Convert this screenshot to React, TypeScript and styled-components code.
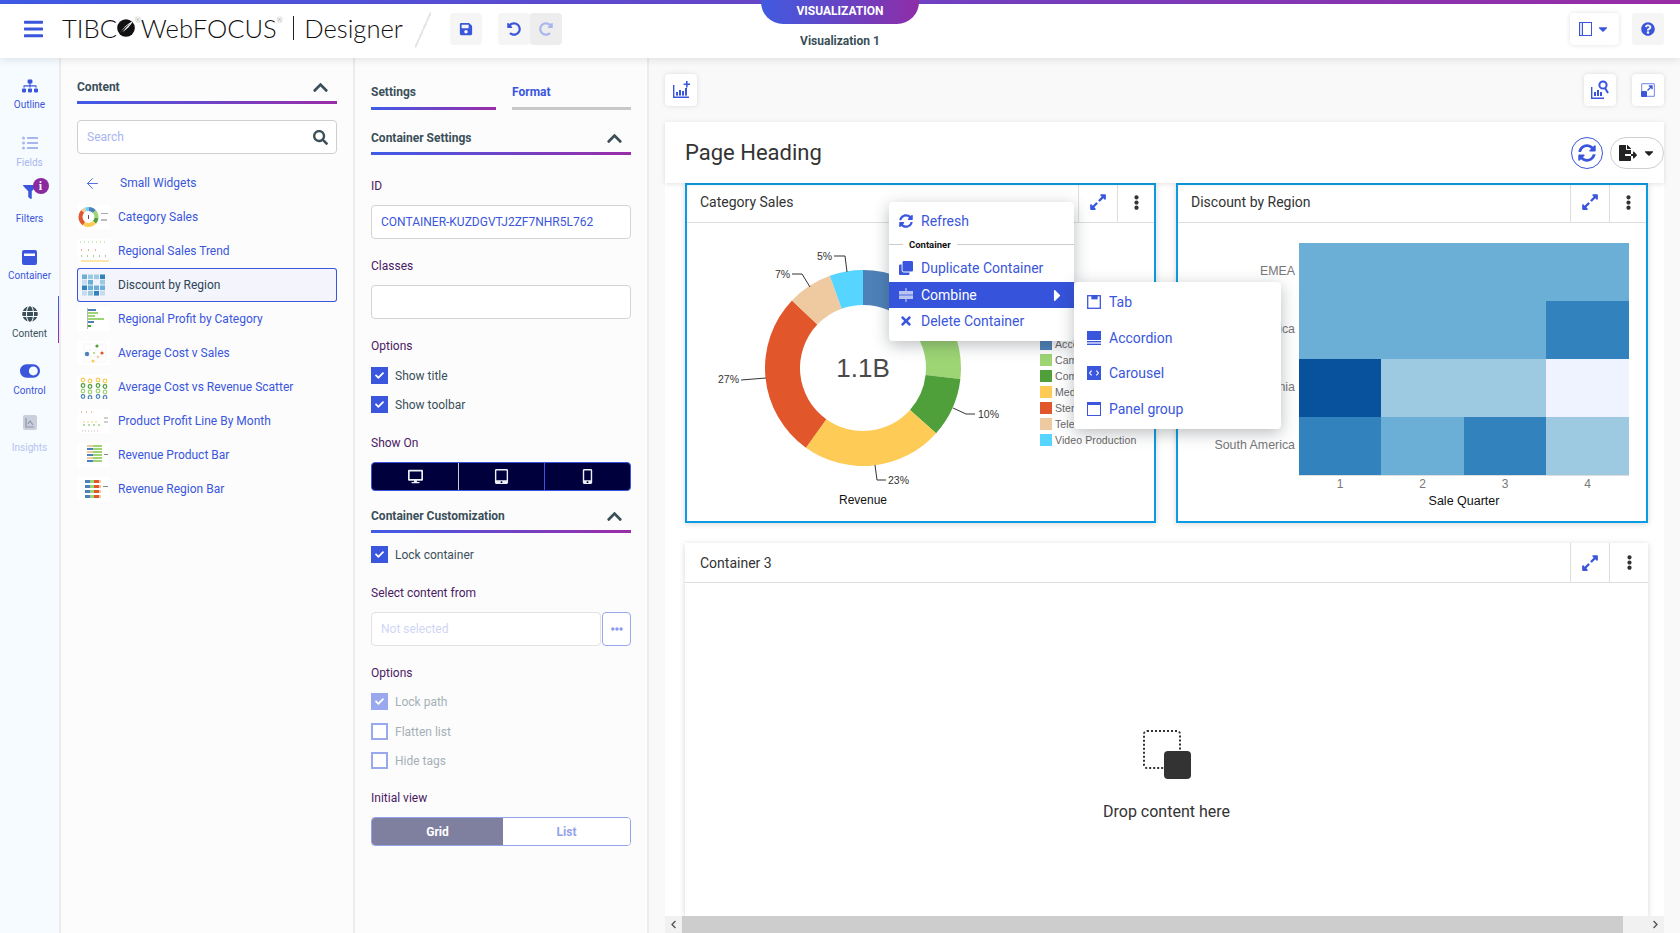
import React from "react";
import styled, { createGlobalStyle } from "styled-components";
import {
  FaBars,
  FaSave,
  FaUndoAlt,
  FaRedoAlt,
  FaSitemap,
  FaListUl,
  FaFilter,
  FaGlobe,
  FaToggleOn,
  FaSearch,
  FaDesktop,
  FaTabletAlt,
  FaMobileAlt,
  FaExpandAlt,
  FaEllipsisV,
  FaEllipsisH,
  FaSyncAlt,
  FaClone,
  FaTimes,
  FaCaretRight,
  FaCaretDown,
  FaQuestionCircle,
  FaFileExport,
  FaChevronUp,
  FaChevronLeft,
  FaChevronRight,
  FaCheck,
} from "react-icons/fa";
import { ArrowLeft } from "lucide-react";

const BLUE = "#3a56dc";
const INK = "#3a4f58";
const PURPLE = "#4a1a62";
const GRADIENT = "linear-gradient(90deg, #3f5be8 0%, #9b2da8 100%)";

const GlobalStyle = createGlobalStyle`
  * { box-sizing: border-box; }
  html, body { margin: 0; padding: 0; background: #fff; }
  body { font-family: Roboto, "Liberation Sans", sans-serif; overflow: hidden; }
`;

const Page = styled.div`
  width: 1680px;
  height: 933px;
  display: flex;
  flex-direction: column;
  overflow: hidden;
  position: relative;
`;

const TopLine = styled.div`
  height: 4px;
  flex: none;
  background: ${GRADIENT};
`;

const Header = styled.header`
  height: 54px;
  flex: none;
  display: flex;
  align-items: flex-start;
  background: #fff;
  box-shadow: 0 2px 8px rgba(0, 0, 0, 0.1);
  position: relative;
  z-index: 5;
  padding: 9px 16px 0 24px;
`;

const Burger = styled.div`
  width: 19px;
  height: 32px;
  display: flex;
  align-items: center;
  color: ${BLUE};
  font-size: 20px;
  margin-right: 19px;
  svg { width: 19px; height: 22px; }
`;

const Logo = styled.div`
  width: 342px;
  height: 30px;
  flex: none;
  display: flex;
  align-items: center;
  font-family: Lato, Roboto, sans-serif;
  font-size: 25.6px;
  font-weight: 300;
  color: #111;
  white-space: nowrap;
  svg { flex: none; }
  sup { font-size: 7px; align-self: flex-start; margin-top: 3px; color: #666; }
`;

const LogoDivider = styled.span`
  width: 1.5px;
  height: 24px;
  flex: none;
  background: #222;
  margin: 0 10px;
`;

const Slash = styled.div`
  width: 16px;
  height: 36px;
  margin: -1px 19px 0 11px;
  background: linear-gradient(
    to bottom right,
    transparent calc(50% - 1px),
    #e6e6e6 calc(50% - 1px),
    #e6e6e6 calc(50% + 1px),
    transparent calc(50% + 1px)
  );
`;

const ToolGroup = styled.div<{ $ml?: number }>`
  display: flex;
  height: 32px;
  margin-left: ${(p) => p.$ml ?? 0}px;
  border-radius: 4px;
  overflow: hidden;
`;

const ToolButton = styled.div<{ $dim?: boolean; $tone?: string }>`
  width: 32px;
  height: 32px;
  border-radius: 3px;
  display: flex;
  align-items: center;
  justify-content: center;
  color: ${(p) => (p.$dim ? "#a9b6ee" : BLUE)};
  background: ${(p) => p.$tone ?? "#f5f5f5"};
  font-size: 14px;
`;

const TitleWrap = styled.div`
  position: absolute;
  left: 761px;
  top: -4px;
  width: 158px;
  display: flex;
  flex-direction: column;
  align-items: center;
`;

const VisTab = styled.div`
  width: 158px;
  height: 24px;
  background: linear-gradient(90deg, #3f5be0, #8f2da8);
  border-radius: 0 0 22px 22px;
  color: #fff;
  font-size: 12px;
  font-weight: 700;
  line-height: 22px;
  text-align: center;
`;

const VisName = styled.div`
  margin-top: 9px;
  font-size: 12px;
  font-weight: 700;
  line-height: 16px;
  color: ${INK};
`;

const HeaderRight = styled.div`
  margin-left: auto;
  display: flex;
  gap: 13px;
`;

const RaisedButton = styled.div<{ $w?: number }>`
  width: ${(p) => p.$w ?? 32}px;
  height: 32px;
  border-radius: 4px;
  background: #fff;
  box-shadow: 0 0 5px rgba(0, 0, 0, 0.12);
  display: flex;
  align-items: center;
  justify-content: center;
  gap: 4px;
  color: ${BLUE};
  font-size: 14px;
`;

const Body = styled.div`
  flex: 1;
  min-height: 0;
  display: flex;
`;

const Rail = styled.nav`
  width: 61px;
  flex: none;
  background: #f6fbff;
  border-right: 2px solid #ececec;
  display: flex;
  flex-direction: column;
  align-items: center;
`;

const RailItem = styled.div<{ $mt: number; $gap: number; $tone: string; $active?: boolean }>`
  width: 59px;
  margin-top: ${(p) => p.$mt}px;
  display: flex;
  flex-direction: column;
  align-items: center;
  gap: ${(p) => p.$gap}px;
  color: ${(p) => p.$tone};
  font-size: 10px;
  line-height: 14px;
  position: relative;
  ${(p) =>
    p.$active
      ? `&::after { content: ""; position: absolute; right: 0; top: -10px; bottom: -2px; width: 1.5px; background: linear-gradient(180deg, #3f5be8, #9b2da8); }`
      : ""}
`;

const RailIcon = styled.div<{ $tone: string }>`
  height: 16px;
  display: flex;
  align-items: center;
  justify-content: center;
  color: ${(p) => p.$tone};
  font-size: 16px;
  position: relative;
`;

const FilterBadge = styled.span`
  position: absolute;
  left: 10px;
  top: -6px;
  width: 16px;
  height: 16px;
  border-radius: 50%;
  background: #8a2a9e;
  color: #fff;
  font: 700 12px/16px "Liberation Serif", serif;
  text-align: center;
`;

const SidePanel = styled.section`
  width: 294px;
  flex: none;
  background: #fcfcfd;
  border-right: 2px solid #ececec;
  padding: 0 16px;
  display: flex;
  flex-direction: column;
`;

const SectionHead = styled.div<{ $mt: number }>`
  margin-top: ${(p) => p.$mt}px;
  height: 31px;
  flex: none;
  display: flex;
  align-items: flex-start;
  justify-content: space-between;
  padding: 6px 8px 0 0;
  position: relative;
  font-size: 12px;
  font-weight: 700;
  line-height: 16px;
  color: ${INK};
  svg { font-size: 17px; margin-top: 0; }
  &::after {
    content: "";
    position: absolute;
    left: 0;
    right: 0;
    bottom: 0;
    height: 3px;
    background: ${GRADIENT};
  }
`;

const SearchBox = styled.div`
  margin-top: 16px;
  height: 34px;
  flex: none;
  border: 1px solid #cfcfcf;
  border-radius: 4px;
  background: #fff;
  display: flex;
  align-items: center;
  justify-content: space-between;
  padding: 0 8px 0 9px;
  color: #a9b6ee;
  font-size: 12px;
  svg { color: ${INK}; font-size: 15px; }
`;

const BackRow = styled.div`
  margin-top: 19px;
  height: 20px;
  flex: none;
  display: flex;
  align-items: center;
  color: ${BLUE};
  font-size: 12px;
  padding-left: 7px;
  svg { margin-right: 19px; }
`;

const WidgetList = styled.div`
  margin-top: 7px;
  display: flex;
  flex-direction: column;
`;

const WidgetRow = styled.div<{ $selected?: boolean }>`
  height: 34px;
  display: flex;
  align-items: center;
  gap: 8px;
  padding-left: 1px;
  font-size: 12px;
  border-radius: 3px;
  color: ${(p) => (p.$selected ? "#2d4455" : BLUE)};
  background: ${(p) => (p.$selected ? "#f3f4fc" : "transparent")};
  box-shadow: ${(p) => (p.$selected ? `inset 0 0 0 1px ${BLUE}` : "none")};
`;

const ThumbBox = styled.svg<{ $clear?: boolean }>`
  width: 32px;
  height: 24px;
  flex: none;
  background: ${(p) => (p.$clear ? "transparent" : "#fff")};
`;

const TabRow = styled.div`
  margin-top: 16px;
  display: flex;
  justify-content: space-between;
`;

const Tab = styled.div<{ $w: number; $active?: boolean }>`
  width: ${(p) => p.$w}px;
  height: 36px;
  padding-top: 10px;
  font-size: 12px;
  font-weight: 700;
  line-height: 16px;
  color: ${(p) => (p.$active ? INK : BLUE)};
  position: relative;
  &::after {
    content: "";
    position: absolute;
    left: 0;
    right: 0;
    bottom: 0;
    height: 3px;
    background: ${(p) => (p.$active ? GRADIENT : "#c8c8c8")};
  }
`;

const FieldLabel = styled.div<{ $mt: number }>`
  margin-top: ${(p) => p.$mt}px;
  flex: none;
  font-size: 12px;
  line-height: 16px;
  color: ${PURPLE};
`;

const TextInput = styled.div`
  margin-top: 11px;
  height: 34px;
  flex: none;
  border: 1px solid #d4d4d4;
  border-radius: 4px;
  background: #fff;
  padding: 0 9px;
  display: flex;
  align-items: center;
  font-size: 12px;
  color: ${BLUE};
`;

const CheckRow = styled.div<{ $mt: number; $off?: boolean }>`
  margin-top: ${(p) => p.$mt}px;
  height: 17px;
  flex: none;
  display: flex;
  align-items: center;
  gap: 7px;
  font-size: 12px;
  color: ${(p) => (p.$off ? "#a5b0b6" : INK)};
`;

const CheckBox = styled.span<{ $checked?: boolean; $off?: boolean }>`
  width: 17px;
  height: 17px;
  flex: none;
  display: flex;
  align-items: center;
  justify-content: center;
  color: #fff;
  font-size: 9px;
  background: ${(p) => (!p.$checked ? "#fff" : p.$off ? "#9aa9ee" : BLUE)};
  border: ${(p) => (p.$checked ? "0" : "2px solid #9aa9ee")};
`;

const DeviceBar = styled.div`
  margin-top: 11px;
  height: 29px;
  flex: none;
  display: grid;
  grid-template-columns: 86px 86px 86px;
  background: #00003c;
  border: 1px solid ${BLUE};
  border-radius: 4px;
  overflow: hidden;
`;

const DeviceCell = styled.div<{ $edge?: string }>`
  display: flex;
  align-items: center;
  justify-content: center;
  color: #eef0f8;
  font-size: 15px;
  border-left: ${(p) => (p.$edge ? `1px solid ${p.$edge}` : "0")};
`;

const PickerRow = styled.div`
  margin-top: 11px;
  display: flex;
  gap: 1px;
  flex: none;
`;

const DisabledInput = styled.div`
  flex: 1;
  height: 34px;
  border: 1px solid #e2e2e2;
  border-radius: 4px;
  background: #fff;
  padding: 0 9px;
  display: flex;
  align-items: center;
  font-size: 12px;
  color: #cfd6f6;
`;

const DotsButton = styled.div`
  width: 29px;
  height: 34px;
  border: 1px solid #9aa9ee;
  border-radius: 4px;
  background: #fff;
  display: flex;
  align-items: center;
  justify-content: center;
  color: #8b9beb;
  font-size: 12px;
`;

const ViewSwitch = styled.div`
  margin-top: 11px;
  height: 29px;
  flex: none;
  display: grid;
  grid-template-columns: 131px 127px;
  border: 1px solid #93a3ec;
  border-radius: 4px;
  overflow: hidden;
  font-size: 12px;
  font-weight: 700;
`;

const ViewOption = styled.div<{ $on?: boolean }>`
  display: flex;
  align-items: center;
  justify-content: center;
  background: ${(p) => (p.$on ? "#7f7f9f" : "#fff")};
  color: ${(p) => (p.$on ? "#fff" : "#93a3ec")};
`;

const Main = styled.main`
  flex: 1;
  min-width: 0;
  background: #f9f9f9;
  padding: 16px 16px 0;
  display: flex;
  flex-direction: column;
`;

const MainTools = styled.div`
  display: flex;
  justify-content: space-between;
  flex: none;
`;

const ToolPair = styled.div`
  display: flex;
  gap: 16px;
`;

const PageHead = styled.div`
  margin-top: 16px;
  height: 61px;
  flex: none;
  background: #fff;
  box-shadow: 0 1px 5px rgba(0, 0, 0, 0.12);
  display: flex;
  align-items: center;
  padding-left: 20px;
  position: relative;
  z-index: 2;
`;

const PageTitle = styled.h1`
  margin: 0;
  font-size: 22px;
  font-weight: 400;
  color: #333;
`;

const HeadActions = styled.div`
  margin-left: auto;
  display: flex;
  gap: 7px;
`;

const RoundButton = styled.div`
  width: 32px;
  height: 32px;
  border: 1px solid ${BLUE};
  border-radius: 50%;
  background: #fff;
  display: flex;
  align-items: center;
  justify-content: center;
  color: ${BLUE};
  font-size: 18px;
`;

const PillButton = styled.div`
  width: 54px;
  height: 32px;
  border: 1px solid #cfcfcf;
  border-radius: 16px;
  background: #fff;
  display: flex;
  align-items: center;
  justify-content: center;
  gap: 5px;
  color: #222;
  font-size: 18px;
  svg + svg { font-size: 14px; }
`;

const Canvas = styled.div`
  flex: 1;
  min-height: 0;
  background: #fff;
  padding: 0 16px 0 20px;
  display: flex;
  flex-direction: column;
  gap: 20px;
  overflow: hidden;
`;

const CardRow = styled.div`
  display: grid;
  grid-template-columns: 471px 472px;
  gap: 20px;
  flex: none;
`;

const Card = styled.article<{ $selected?: boolean; $fill?: boolean }>`
  height: ${(p) => (p.$fill ? "auto" : "340px")};
  flex: ${(p) => (p.$fill ? "1" : "none")};
  background: #fff;
  border: ${(p) => (p.$selected ? "2px solid #0b9be3" : "0")};
  box-shadow: 0 1px 6px rgba(0, 0, 0, 0.16);
  display: flex;
  flex-direction: column;
  position: relative;
`;

const CardHead = styled.div<{ $plain?: boolean }>`
  height: ${(p) => (p.$plain ? 40 : 38)}px;
  flex: none;
  display: flex;
  align-items: stretch;
  border-bottom: 1px solid #dedede;
  font-size: 14px;
  color: #333;
`;

const CardTitle = styled.div<{ $pl: number; $pb: number }>`
  flex: 1;
  display: flex;
  align-items: center;
  padding: 0 0 ${(p) => p.$pb}px ${(p) => p.$pl}px;
`;

const CardAction = styled.div<{ $tone: string; $w: number; $size: number; $pb: number }>`
  width: ${(p) => p.$w}px;
  display: flex;
  align-items: center;
  justify-content: center;
  padding-bottom: ${(p) => p.$pb}px;
  border-left: 1px solid #dedede;
  color: ${(p) => p.$tone};
  font-size: ${(p) => p.$size}px;
`;

const ChartSvg = styled.svg`
  flex: 1;
  min-height: 0;
  display: block;
  font-family: "Liberation Sans", Arial, sans-serif;
`;

const Menu = styled.div<{ $left: number; $top: number; $w: number; $h: number }>`
  position: absolute;
  left: ${(p) => p.$left}px;
  top: ${(p) => p.$top}px;
  width: ${(p) => p.$w}px;
  height: ${(p) => p.$h}px;
  background: #fff;
  border-radius: 4px;
  box-shadow: 0 4px 16px rgba(40, 50, 60, 0.32);
  z-index: 10;
  display: flex;
  flex-direction: column;
`;

const MenuRow = styled.div<{ $h: number; $on?: boolean; $pt?: number }>`
  height: ${(p) => p.$h}px;
  flex: none;
  display: flex;
  align-items: center;
  gap: 8px;
  padding: ${(p) => p.$pt ?? 0}px 13px 0 10px;
  font-size: 14px;
  color: ${(p) => (p.$on ? "#fff" : BLUE)};
  background: ${(p) => (p.$on ? "#3553db" : "transparent")};
`;

const MenuIcon = styled.span<{ $tone?: string }>`
  width: 14px;
  height: 14px;
  flex: none;
  display: flex;
  align-items: center;
  justify-content: center;
  font-size: 14px;
  color: ${(p) => p.$tone ?? BLUE};
`;

const MenuCaret = styled.span`
  margin-left: auto;
  margin-right: -6px;
  display: flex;
  font-size: 19px;
`;

const MenuGroupLabel = styled.div`
  height: 18px;
  flex: none;
  display: flex;
  align-items: center;
  gap: 6px;
  font-size: 9.5px;
  font-weight: 700;
  color: #111;
  &::before { content: ""; width: 14px; height: 1px; background: #ccc; }
  &::after { content: ""; flex: 1; height: 1px; background: #ccc; }
`;

const SubMenuRow = styled(MenuRow)`
  padding-left: 13px;
`;

const DropZone = styled.div`
  flex: 1;
  display: flex;
  flex-direction: column;
  align-items: center;
  padding-top: 147px;
  font-size: 16px;
  color: #333;
`;

const DropLabel = styled.div`
  margin-top: 23px;
  line-height: 20px;
`;

const ScrollBar = styled.div`
  height: 17px;
  flex: none;
  display: flex;
  background: #f1f1f1;
  color: #555;
  font-size: 9px;
`;

const ScrollArrow = styled.div<{ $w: number; $end?: boolean }>`
  width: ${(p) => p.$w}px;
  flex: none;
  display: flex;
  align-items: center;
  justify-content: ${(p) => (p.$end ? "flex-end" : "center")};
  padding-right: ${(p) => (p.$end ? 4 : 0)}px;
`;

const ScrollThumb = styled.div`
  flex: 1;
  background: #cdcdcd;
`;

const PanelIcon = () => (
  <svg width="13" height="14" viewBox="0 0 13 14" fill="none" stroke={BLUE} strokeWidth="1">
    <rect x="0.5" y="0.5" width="12" height="13" />
    <rect x="0.5" y="0.5" width="3" height="13" fill={BLUE} fillOpacity="0.2" />
  </svg>
);

const ChartPlus = () => (
  <svg width="18" height="18" viewBox="0 0 18 18" fill={BLUE}>
    <path d="M1 4h1.4v11.6H17V17H1z" />
    <rect x="4" y="11" width="2" height="3.6" />
    <rect x="7" y="9" width="2" height="5.6" />
    <rect x="10" y="10" width="2" height="4.6" />
    <rect x="13" y="7" width="2" height="7.6" />
    <path d="M14 0h1.6v2.4H18V4h-2.4v2.4H14V4h-2.4V2.4H14z" />
  </svg>
);

const ChartSearch = () => (
  <svg width="20" height="20" viewBox="0 0 20 20" fill={BLUE}>
    <path d="M1 7h1.4v10.6H14V19H1z" />
    <rect x="4" y="12" width="2" height="4" />
    <rect x="7" y="10" width="2" height="6" />
    <rect x="10" y="12" width="2" height="4" />
    <circle cx="13" cy="5" r="3.6" fill="none" stroke={BLUE} strokeWidth="2" />
    <path d="M15 8l3 5" stroke={BLUE} strokeWidth="2" />
  </svg>
);

const Maximize = () => (
  <svg width="14" height="14" viewBox="0 0 14 14" fill="none">
    <rect x="0.6" y="0.6" width="12.8" height="12.8" rx="1" stroke="#8b9beb" strokeWidth="1.2" />
    <rect x="0" y="8" width="6" height="6" rx="1" fill={BLUE} />
    <path d="M6.5 7.5L11 3M7.8 3H11v3.2" stroke={BLUE} strokeWidth="1.4" />
  </svg>
);

const ContainerIcon = () => (
  <svg width="15" height="15" viewBox="0 0 15 15">
    <rect width="15" height="15" rx="2" fill={BLUE} />
    <rect x="2" y="3.5" width="11" height="2.5" fill="#fff" />
  </svg>
);

const CombineIcon = () => (
  <svg width="14" height="14" viewBox="0 0 14 14" fill="#b9c4f2">
    <rect x="0" y="3" width="14" height="8" />
    <rect x="6.4" y="0" width="1.2" height="14" />
    <path d="M0 7h14" stroke="#3553db" strokeWidth="0.8" />
  </svg>
);

const TabIcon = () => (
  <svg width="14" height="14" viewBox="0 0 14 14" fill="none" stroke={BLUE} strokeWidth="1.3">
    <rect x="0.7" y="0.7" width="12.6" height="12.6" />
    <rect x="5" y="0.7" width="5" height="3" fill={BLUE} />
  </svg>
);

const AccordionIcon = () => (
  <svg width="14" height="14" viewBox="0 0 14 14" fill={BLUE}>
    <rect x="0" y="0" width="14" height="9" />
    <rect x="0" y="10" width="14" height="1.4" />
    <rect x="0" y="12.6" width="14" height="1.4" />
  </svg>
);

const CarouselIcon = () => (
  <svg width="14" height="14" viewBox="0 0 14 14">
    <rect width="14" height="14" fill={BLUE} />
    <path d="M4.6 4.6L2.6 7l2 2.4M9.4 4.6l2 2.4-2 2.4" fill="none" stroke="#fff" strokeWidth="1.1" />
  </svg>
);

const PanelGroupIcon = () => (
  <svg width="14" height="14" viewBox="0 0 14 14" fill="none" stroke={BLUE} strokeWidth="1">
    <rect x="0.5" y="0.5" width="13" height="13" />
    <rect x="0" y="0" width="14" height="3" fill={BLUE} stroke="none" />
  </svg>
);

const TibcoMark = () => (
  <svg width="18" height="18" viewBox="0 0 18 18">
    <ellipse cx="9" cy="9" rx="8.8" ry="8.8" fill="#111" />
    <path d="M2.5 14.5C6 9 10 5 16 2c-2.5 4.5-6 8.5-10.5 11 2.5-3 5-6 8-8.5C9 7 5.5 10.5 2.5 14.5z" fill="#fff" />
  </svg>
);

const InsightIcon = () => (
  <svg width="14" height="15" viewBox="0 0 14 15">
    <rect width="14" height="15" rx="2" fill="#c9d0dc" />
    <path d="M3 3v9h8M5 9l2-3 3 4" fill="none" stroke="#8d96a8" strokeWidth="1.2" />
  </svg>
);

const arcPath = (from: number, to: number, cx: number, cy: number, r: number, ir: number) => {
  const pt = (a: number, rad: number) => {
    const t = (a / 100) * Math.PI * 2;
    return `${(cx + rad * Math.sin(t)).toFixed(2)} ${(cy - rad * Math.cos(t)).toFixed(2)}`;
  };
  const large = to - from > 50 ? 1 : 0;
  return `M${pt(from, r)}A${r} ${r} 0 ${large} 1 ${pt(to, r)}L${pt(to, ir)}A${ir} ${ir} 0 ${large} 0 ${pt(from, ir)}Z`;
};

const slices = [
  { pct: 13.2, color: "#4e81b8" },
  { pct: 13.6, color: "#9dd574" },
  { pct: 9.8, color: "#4f9f3a" },
  { pct: 23.3, color: "#fdcb56" },
  { pct: 27.2, color: "#e2562b" },
  { pct: 7.4, color: "#efcaa0" },
  { pct: 5.5, color: "#55d5ff" },
];

const Donut = ({ cx, cy, r, ir }: { cx: number; cy: number; r: number; ir: number }) => {
  let acc = 0;
  return (
    <>
      {slices.map((s) => {
        const d = arcPath(acc, acc + s.pct, cx, cy, r, ir);
        acc += s.pct;
        return <path key={s.color} d={d} fill={s.color} />;
      })}
    </>
  );
};

const thumbHeat = ["#6baed6", "#9ecae1", "#9ecae1", "#3182bd", "#c6dbef", "#6baed6", "#eff3ff", "#9ecae1", "#3182bd", "#6baed6", "#6baed6", "#6baed6", "#c6dbef", "#9ecae1", "#3182bd", "#c6dbef"];

const thumbShapes: Record<string, React.ReactNode> = {
  donut: (
    <>
      <Donut cx={10.5} cy={12} r={10} ir={6} />
      <rect x="10" y="10" width="1" height="4" fill="#555" />
      <rect x="23" y="8" width="7" height="1" fill="#aaa" />
      <rect x="23" y="14" width="6" height="2" fill="#bbb" />
    </>
  ),
  trend: (
    <>
      <path d="M2 3h26" stroke="#9dd574" strokeWidth="1" strokeDasharray="1 3" />
      <path d="M3 11h20" stroke="#e2562b" strokeWidth="1" strokeDasharray="1 6" />
      <path d="M3 17h26" stroke="#4f9f3a" strokeWidth="1" strokeDasharray="1 5" />
      <path d="M3 22h28" stroke="#fdcb56" strokeWidth="1" />
    </>
  ),
  heat: (
    <>
      {thumbHeat.map((c, i) => (
        <rect key={i} x={4 + (i % 4) * 6} y={1.5 + Math.floor(i / 4) * 5.5} width="5" height="4.6" fill={c} />
      ))}
    </>
  ),
  hbar: (
    <>
      <rect x="10" y="2" width="8" height="2" fill="#4e81b8" />
      <rect x="10" y="5" width="10" height="2" fill="#9dd574" />
      <rect x="10" y="8" width="7" height="2" fill="#9dd574" />
      <rect x="10" y="11" width="16" height="2" fill="#9dd574" />
      <rect x="10" y="14" width="6" height="2" fill="#4e81b8" />
      <rect x="10" y="18" width="3" height="2" fill="#4f9f3a" />
      <rect x="9" y="1" width="0.6" height="21" fill="#888" />
    </>
  ),
  scatter: (
    <>
      <path d="M6 3h22v18H6zM12 3v18M18 3v18M24 3v18M6 9h22M6 15h22" fill="none" stroke="#eee" strokeWidth="0.5" />
      <circle cx="9" cy="13" r="2.2" fill="#4e81b8" />
      <circle cx="19" cy="5" r="1.6" fill="#4f9f3a" />
      <circle cx="24" cy="12" r="1.6" fill="#e2562b" />
      <circle cx="16" cy="12" r="1" fill="#9dd574" />
      <circle cx="20" cy="16" r="1.2" fill="#efcaa0" />
      <circle cx="15" cy="20" r="1.6" fill="#fdcb56" />
    </>
  ),
  bubbles: (
    <>
      {[5, 12, 20, 27].map((x, i) =>
        ["#fdcb56", "#4f9f3a", "#9dd574", "#4e81b8"].map((c, j) => (
          <circle key={c} cx={x} cy={5 + j * 5.5 + (i % 2)} r="1.8" fill="none" stroke={c} strokeWidth="1.2" />
        ))
      )}
    </>
  ),
  line: (
    <>
      <path d="M3 3h12" stroke="#e2562b" strokeWidth="0.8" strokeDasharray="1 4" />
      <path d="M5 13h14" stroke="#fdcb56" strokeWidth="0.8" strokeDasharray="2 2" />
      <path d="M5 16h18" stroke="#4f9f3a" strokeWidth="0.8" strokeDasharray="2 3" />
      <path d="M4 22h18" stroke="#aaa" strokeWidth="0.8" strokeDasharray="1 2" />
      <path d="M26 9h4M26 13h4" stroke="#888" strokeWidth="0.8" />
    </>
  ),
  revbar: (
    <>
      {[2, 5, 8, 11, 14, 17].map((y, i) => (
        <g key={y}>
          <rect x="9" y={y} width="6" height="2" fill={i % 2 ? "#4e81b8" : "#efcaa0"} />
          <rect x="15" y={y} width="9" height="2" fill="#9dd574" />
        </g>
      ))}
      <rect x="26" y="11" width="4" height="1" fill="#888" />
    </>
  ),
  stack: (
    <>
      {[3, 8, 13, 18].map((y) => (
        <g key={y}>
          <rect x="7" y={y} width="5" height="3" fill="#4e81b8" />
          <rect x="12" y={y} width="4" height="3" fill="#9dd574" />
          <rect x="16" y={y} width="5" height="3" fill="#e2562b" />
          <rect x="21" y={y} width="2" height="3" fill="#efcaa0" />
        </g>
      ))}
      <rect x="25" y="9" width="5" height="1" fill="#888" />
    </>
  ),
};

const widgets = [
  { name: "Category Sales", thumb: "donut" },
  { name: "Regional Sales Trend", thumb: "trend" },
  { name: "Discount by Region", thumb: "heat", selected: true },
  { name: "Regional Profit by Category", thumb: "hbar" },
  { name: "Average Cost v Sales", thumb: "scatter" },
  { name: "Average Cost vs Revenue Scatter", thumb: "bubbles" },
  { name: "Product Profit Line By Month", thumb: "line" },
  { name: "Revenue Product Bar", thumb: "revbar" },
  { name: "Revenue Region Bar", thumb: "stack" },
];

const railItems = [
  { label: "Outline", icon: <FaSitemap />, mt: 20, gap: 4, tone: BLUE, iconTone: BLUE },
  { label: "Fields", icon: <FaListUl />, mt: 23, gap: 5, tone: "#a9b6ee", iconTone: "#a9b6ee" },
  { label: "Filters", icon: <FaFilter size={14} />, mt: 14, gap: 12, tone: BLUE, iconTone: BLUE, badge: true },
  { label: "Container", icon: <ContainerIcon />, mt: 23, gap: 4, tone: BLUE, iconTone: BLUE },
  { label: "Content", icon: <FaGlobe />, mt: 23, gap: 5, tone: INK, iconTone: INK, active: true },
  { label: "Control", icon: <FaToggleOn size={20} />, mt: 22, gap: 5, tone: BLUE, iconTone: BLUE },
  { label: "Insights", icon: <InsightIcon />, mt: 16, gap: 11, tone: "#b5c3f0", iconTone: "#b5c3f0" },
];

const legend = [
  { name: "Accessories", color: "#4e81b8" },
  { name: "Camcorder", color: "#9dd574" },
  { name: "Computers", color: "#4f9f3a" },
  { name: "Media Player", color: "#fdcb56" },
  { name: "Stereo Systems", color: "#e2562b" },
  { name: "Television", color: "#efcaa0" },
  { name: "Video Production", color: "#55d5ff" },
];

const leaders = [
  { d: "M834 256h11l2 16", x: 817, y: 260, t: "5%" },
  { d: "M792 274h10l8 13", x: 775, y: 278, t: "7%" },
  { d: "M741 380l25-2", x: 718, y: 383, t: "27%" },
  { d: "M953 408l13 6h9", x: 978, y: 418, t: "10%" },
  { d: "M875 465l2 15h9", x: 888, y: 484, t: "23%" },
];

const heat = [
  ["#6baed6", "#6baed6", "#6baed6", "#6baed6"],
  ["#6baed6", "#6baed6", "#6baed6", "#3182bd"],
  ["#08519c", "#9ecae1", "#9ecae1", "#eff3ff"],
  ["#3182bd", "#6baed6", "#3182bd", "#9ecae1"],
];
const heatX = [1299, 1381, 1464, 1546, 1629];
const heatY = [243, 301, 359, 417, 475];
const regions = ["EMEA", "North America", "Oceania", "South America"];

const DonutChart = () => (
  <ChartSvg viewBox="687 223 467 298">
    <Donut cx={863} cy={368} r={98} ir={63} />
    {leaders.map((l) => (
      <g key={l.t}>
        <path d={l.d} fill="none" stroke="#333" strokeWidth="1" />
        <text x={l.x} y={l.y} fontSize="10.5" fill="#333">{l.t}</text>
      </g>
    ))}
    <text x="863" y="377" fontSize="26" fill="#4a4a4a" textAnchor="middle">1.1B</text>
    <text x="863" y="504" fontSize="12" fill="#111" textAnchor="middle">Revenue</text>
    {legend.map((l, i) => (
      <g key={l.name}>
        <rect x="1040" y={338 + i * 16} width="12" height="12" fill={l.color} />
        <text x="1055" y={348 + i * 16} fontSize="10.5" fill="#666" letterSpacing="0.1">{l.name}</text>
      </g>
    ))}
  </ChartSvg>
);

const HeatChart = () => (
  <ChartSvg viewBox="1178 223 468 298" shapeRendering="crispEdges">
    {heat.map((row, r) =>
      row.map((c, i) => (
        <rect
          key={`${r}-${i}`}
          x={heatX[i]}
          y={heatY[r]}
          width={heatX[i + 1] - heatX[i]}
          height={heatY[r + 1] - heatY[r]}
          fill={c}
        />
      ))
    )}
    <path d="M1299 475.5h330" stroke="#ddd" />
    {regions.map((name, r) => (
      <text key={name} x="1295" y={275 + r * 58} fontSize="12.4" fill="#777" textAnchor="end">{name}</text>
    ))}
    {[1, 2, 3, 4].map((q, i) => (
      <text key={q} x={(heatX[i] + heatX[i + 1]) / 2} y="488" fontSize="12" fill="#777" textAnchor="middle">{q}</text>
    ))}
    <text x="1464" y="505" fontSize="12.5" fill="#111" textAnchor="middle">Sale Quarter</text>
  </ChartSvg>
);

const DropIcon = () => (
  <svg width="48" height="49" viewBox="0 0 48 49">
    <rect x="1" y="1" width="36" height="37" rx="3" fill="none" stroke="#333" strokeWidth="2" strokeDasharray="2 2" />
    <rect x="21" y="21" width="27" height="28" rx="4" fill="#333" />
  </svg>
);

const CardBar = ({ title, plain }: { title: string; plain?: boolean }) => {
  const pb = plain ? 0 : 3;
  return (
    <CardHead $plain={plain}>
      <CardTitle $pl={plain ? 15 : 13} $pb={pb}>{title}</CardTitle>
      <CardAction $tone={BLUE} $w={39} $size={18} $pb={pb}><FaExpandAlt /></CardAction>
      <CardAction $tone="#333" $w={plain ? 39 : 37} $size={15} $pb={pb}><FaEllipsisV /></CardAction>
    </CardHead>
  );
};

const Check = ({ label, mt, checked, off }: { label: string; mt: number; checked?: boolean; off?: boolean }) => (
  <CheckRow $mt={mt} $off={off}>
    <CheckBox $checked={checked} $off={off}>{checked && <FaCheck />}</CheckBox>
    {label}
  </CheckRow>
);

export default function App() {
  return (
    <Page>
      <GlobalStyle />
      <TopLine />
      <Header>
        <Burger><FaBars /></Burger>
        <Logo>
          TIBC<TibcoMark /><sup>®</sup>WebFOCUS<sup>®</sup>
          <LogoDivider />Designer
        </Logo>
        <Slash />
        <ToolGroup><ToolButton><FaSave /></ToolButton></ToolGroup>
        <ToolGroup $ml={16}>
          <ToolButton><FaUndoAlt /></ToolButton>
          <ToolButton $dim $tone="#ededed"><FaRedoAlt /></ToolButton>
        </ToolGroup>
        <TitleWrap>
          <VisTab>VISUALIZATION</VisTab>
          <VisName>Visualization 1</VisName>
        </TitleWrap>
        <HeaderRight>
          <RaisedButton $w={49}><PanelIcon /><FaCaretDown /></RaisedButton>
          <ToolButton><FaQuestionCircle /></ToolButton>
        </HeaderRight>
      </Header>
      <Body>
        <Rail>
          {railItems.map((r) => (
            <RailItem key={r.label} $mt={r.mt} $gap={r.gap} $tone={r.tone} $active={r.active}>
              <RailIcon $tone={r.iconTone}>
                {r.icon}
                {r.badge && <FilterBadge>i</FilterBadge>}
              </RailIcon>
              {r.label}
            </RailItem>
          ))}
        </Rail>
        <SidePanel>
          <SectionHead $mt={15}>Content<FaChevronUp /></SectionHead>
          <SearchBox>Search<FaSearch /></SearchBox>
          <BackRow><ArrowLeft size={17} strokeWidth={1.2} />Small Widgets</BackRow>
          <WidgetList>
            {widgets.map((w) => (
              <WidgetRow key={w.name} $selected={w.selected}>
                <ThumbBox viewBox="0 0 32 24" $clear={w.selected}>{thumbShapes[w.thumb]}</ThumbBox>
                {w.name}
              </WidgetRow>
            ))}
          </WidgetList>
        </SidePanel>
        <SidePanel>
          <TabRow>
            <Tab $w={125} $active>Settings</Tab>
            <Tab $w={119}>Format</Tab>
          </TabRow>
          <SectionHead $mt={14}>Container Settings<FaChevronUp /></SectionHead>
          <FieldLabel $mt={23}>ID</FieldLabel>
          <TextInput>CONTAINER-KUZDGVTJ2ZF7NHR5L762</TextInput>
          <FieldLabel $mt={19}>Classes</FieldLabel>
          <TextInput />
          <FieldLabel $mt={19}>Options</FieldLabel>
          <Check label="Show title" mt={13} checked />
          <Check label="Show toolbar" mt={12} checked />
          <FieldLabel $mt={22}>Show On</FieldLabel>
          <DeviceBar>
            <DeviceCell><FaDesktop /></DeviceCell>
            <DeviceCell $edge="#cccccc"><FaTabletAlt /></DeviceCell>
            <DeviceCell $edge={BLUE}><FaMobileAlt /></DeviceCell>
          </DeviceBar>
          <SectionHead $mt={11}>Container Customization<FaChevronUp /></SectionHead>
          <Check label="Lock container" mt={13} checked />
          <FieldLabel $mt={22}>Select content from</FieldLabel>
          <PickerRow>
            <DisabledInput>Not selected</DisabledInput>
            <DotsButton><FaEllipsisH /></DotsButton>
          </PickerRow>
          <FieldLabel $mt={19}>Options</FieldLabel>
          <Check label="Lock path" mt={12} checked off />
          <Check label="Flatten list" mt={13} off />
          <Check label="Hide tags" mt={12} off />
          <FieldLabel $mt={21}>Initial view</FieldLabel>
          <ViewSwitch>
            <ViewOption $on>Grid</ViewOption>
            <ViewOption>List</ViewOption>
          </ViewSwitch>
        </SidePanel>
        <Main>
          <MainTools>
            <RaisedButton><ChartPlus /></RaisedButton>
            <ToolPair>
              <RaisedButton><ChartSearch /></RaisedButton>
              <RaisedButton><Maximize /></RaisedButton>
            </ToolPair>
          </MainTools>
          <PageHead>
            <PageTitle>Page Heading</PageTitle>
            <HeadActions>
              <RoundButton><FaSyncAlt /></RoundButton>
              <PillButton><FaFileExport /><FaCaretDown /></PillButton>
            </HeadActions>
          </PageHead>
          <Canvas>
            <CardRow>
              <Card $selected>
                <CardBar title="Category Sales" />
                <DonutChart />
                <Menu $left={202} $top={17} $w={185} $h={139}>
                  <MenuRow $h={33} $pt={4}>
                    <MenuIcon><FaSyncAlt /></MenuIcon>Refresh
                  </MenuRow>
                  <MenuGroupLabel>Container</MenuGroupLabel>
                  <MenuRow $h={29}>
                    <MenuIcon><FaClone /></MenuIcon>Duplicate Container
                  </MenuRow>
                  <MenuRow $h={26} $on>
                    <MenuIcon><CombineIcon /></MenuIcon>Combine
                    <MenuCaret><FaCaretRight /></MenuCaret>
                  </MenuRow>
                  <MenuRow $h={26}>
                    <MenuIcon><FaTimes /></MenuIcon>Delete Container
                  </MenuRow>
                </Menu>
                <Menu $left={387} $top={97} $w={207} $h={147}>
                  <SubMenuRow $h={39}><MenuIcon><TabIcon /></MenuIcon>Tab</SubMenuRow>
                  <SubMenuRow $h={34}><MenuIcon><AccordionIcon /></MenuIcon>Accordion</SubMenuRow>
                  <SubMenuRow $h={36}><MenuIcon><CarouselIcon /></MenuIcon>Carousel</SubMenuRow>
                  <SubMenuRow $h={35}><MenuIcon><PanelGroupIcon /></MenuIcon>Panel group</SubMenuRow>
                </Menu>
              </Card>
              <Card $selected>
                <CardBar title="Discount by Region" />
                <HeatChart />
              </Card>
            </CardRow>
            <Card $fill>
              <CardBar title="Container 3" plain />
              <DropZone>
                <DropIcon />
                <DropLabel>Drop content here</DropLabel>
              </DropZone>
            </Card>
          </Canvas>
          <ScrollBar>
            <ScrollArrow $w={17}><FaChevronLeft /></ScrollArrow>
            <ScrollThumb />
            <ScrollArrow $w={41} $end><FaChevronRight /></ScrollArrow>
          </ScrollBar>
        </Main>
      </Body>
    </Page>
  );
}
